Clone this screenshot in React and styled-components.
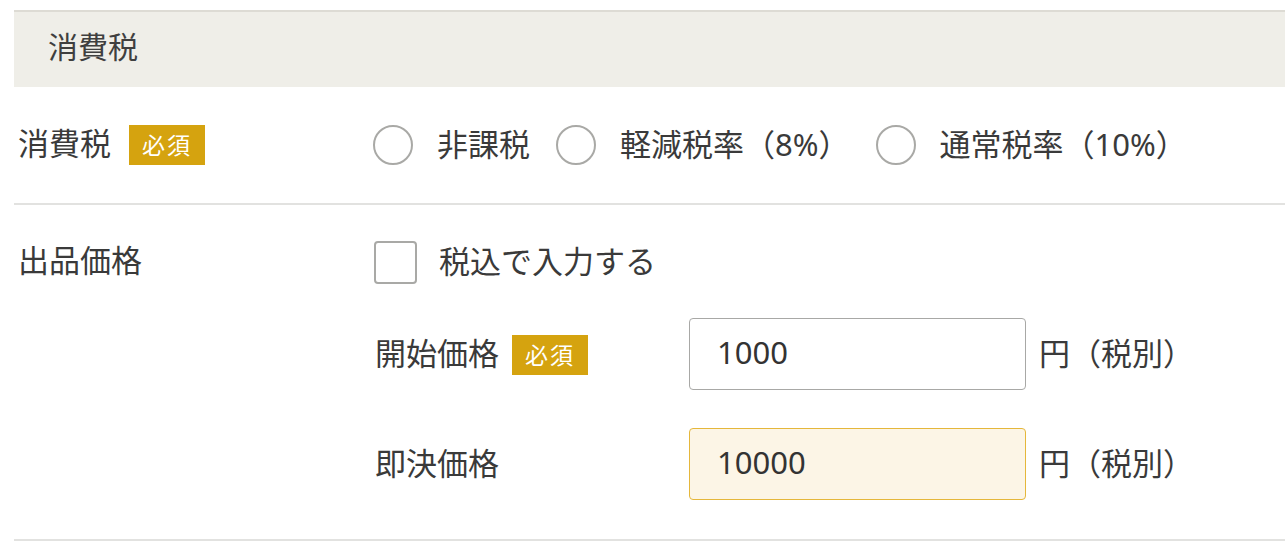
import React, { useState } from "react";
import styled, { createGlobalStyle } from "styled-components";

const GlobalStyle = createGlobalStyle`
  body {
    margin: 0;
    background: #fff;
    font-family: "Noto Sans", "Noto Sans CJK JP", sans-serif;
    color: #333;
  }
`;

const Page = styled.div`
  padding: 10px 0 0 14px;
`;

const SectionHead = styled.div`
  display: flex;
  align-items: center;
  padding: 0 0 9px 34px;
  box-sizing: border-box;
  height: 77px;
  background: #efeee8;
  border-top: 2px solid #dddbd4;
  font-size: 30px;
  color: #3f3f3f;
`;

const Row = styled.div`
  display: flex;
  align-items: ${(p) => (p.top ? "flex-start" : "center")};
  min-height: ${(p) => p.minHeight || 0}px;
  padding: ${(p) => p.pad || "0"};
  border-bottom: 2px solid #e2e2e0;
  box-sizing: border-box;
`;

const LabelCell = styled.div`
  width: 359px;
  flex-shrink: 0;
  display: flex;
  align-items: center;
  padding: 0 0 8px 4px;
  box-sizing: border-box;
  font-size: 31px;
  color: #3a3a3a;
  height: ${(p) => (p.h ? `${p.h}px` : "auto")};
`;

const Badge = styled.span`
  display: inline-flex;
  align-items: center;
  justify-content: center;
  width: 76px;
  height: 40px;
  margin: 8px 0 0 ${(p) => p.gap || 18}px;
  padding-bottom: 3px;
  box-sizing: border-box;
  background: #d5a30f;
  color: #fff;
  font-size: 23px;
  letter-spacing: 2px;
`;

const RadioGroup = styled.div`
  display: flex;
  align-items: center;
  gap: 26px;
`;

const Choice = styled.label`
  display: flex;
  align-items: center;
  gap: 24px;
  font-size: 31px;
  color: #3a3a3a;
  cursor: pointer;
`;

const ChoiceText = styled.span`
  padding-bottom: 6px;
`;

const RadioMark = styled.span`
  width: 40px;
  height: 40px;
  border-radius: 50%;
  border: 2px solid ${(p) => (p.on ? "#d5a30f" : "#a9a9a6")};
  box-sizing: border-box;
  display: flex;
  align-items: center;
  justify-content: center;
  &::after {
    content: "";
    width: 20px;
    height: 20px;
    border-radius: 50%;
    background: ${(p) => (p.on ? "#d5a30f" : "transparent")};
  }
`;

const CheckMark = styled.span`
  width: 43px;
  height: 43px;
  border: 2px solid #a9a9a6;
  border-radius: 4px;
  box-sizing: border-box;
  background: ${(p) => (p.on ? "#d5a30f" : "#fff")};
`;

const Fields = styled.div`
  display: flex;
  flex-direction: column;
`;

const CheckLine = styled(Choice)`
  height: 43px;
  gap: 22px;
  margin-left: 1px;
  margin-bottom: 34px;
`;

const PriceLine = styled.div`
  display: flex;
  align-items: center;
  height: 72px;
  margin-top: ${(p) => p.mt || 0}px;
`;

const SubLabel = styled.div`
  width: 316px;
  display: flex;
  align-items: center;
  font-size: 31px;
  color: #3a3a3a;
  padding: 0 0 6px 2px;
  box-sizing: border-box;
`;

const PriceInput = styled.input`
  width: 337px;
  height: 72px;
  box-sizing: border-box;
  padding: 0 0 4px 27px;
  border: 1.5px solid ${(p) => (p.hl ? "#e5b73b" : "#a8a8a6")};
  border-radius: 4px;
  background: ${(p) => (p.hl ? "#fcf5e6" : "#fff")};
  font-family: inherit;
  font-size: 31px;
  color: #333;
  outline: none;
`;

const Unit = styled.span`
  margin-left: 13px;
  padding-bottom: 6px;
  font-size: 31px;
  color: #3a3a3a;
`;

const taxOptions = ["非課税", "軽減税率（8%）", "通常税率（10%）"];

export default function App() {
  const [tax, setTax] = useState(null);
  const [incl, setIncl] = useState(false);
  const [start, setStart] = useState("1000");
  const [buyNow, setBuyNow] = useState("10000");

  return (
    <Page>
      <GlobalStyle />
      <SectionHead>消費税</SectionHead>
      <Row minHeight={118}>
        <LabelCell>
          消費税
          <Badge>必須</Badge>
        </LabelCell>
        <RadioGroup>
          {taxOptions.map((t) => (
            <Choice key={t} onClick={() => setTax(t)}>
              <RadioMark on={tax === t ? 1 : 0} />
              <ChoiceText>{t}</ChoiceText>
            </Choice>
          ))}
        </RadioGroup>
      </Row>
      <Row top pad="36px 0 39px">
        <LabelCell h={43}>出品価格</LabelCell>
        <Fields>
          <CheckLine onClick={() => setIncl((v) => !v)}>
            <CheckMark on={incl ? 1 : 0} />
            <ChoiceText>税込で入力する</ChoiceText>
          </CheckLine>
          <PriceLine>
            <SubLabel>
              開始価格
              <Badge gap={13}>必須</Badge>
            </SubLabel>
            <PriceInput value={start} onChange={(e) => setStart(e.target.value)} />
            <Unit>円（税別）</Unit>
          </PriceLine>
          <PriceLine mt={38}>
            <SubLabel>即決価格</SubLabel>
            <PriceInput hl={1} value={buyNow} onChange={(e) => setBuyNow(e.target.value)} />
            <Unit>円（税別）</Unit>
          </PriceLine>
        </Fields>
      </Row>
    </Page>
  );
}
